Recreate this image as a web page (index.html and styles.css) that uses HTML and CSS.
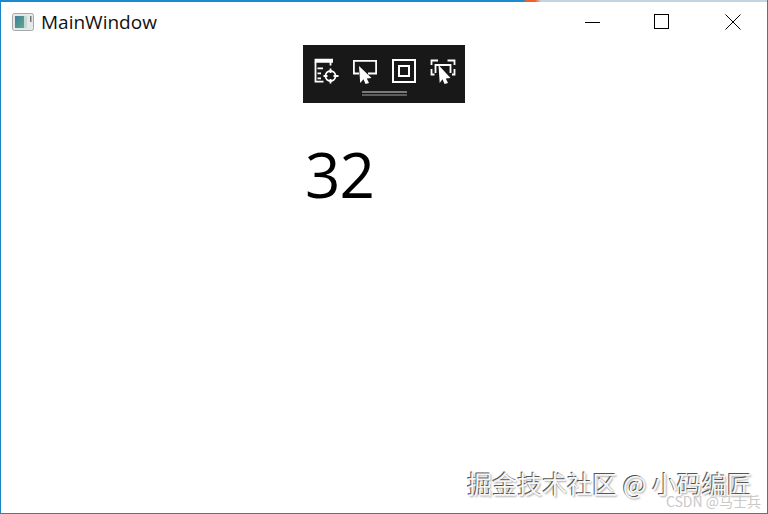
FILE: index.html
```html
<!DOCTYPE html>
<html lang="zh-CN">
<head>
    <meta charset="UTF-8">
    <meta name="viewport" content="width=device-width, initial-scale=1.0">
    <title>MainWindow</title>
    <link rel="stylesheet" href="styles.css">
</head>
<body>
    <div class="ventana">
        <div class="franja"></div>

        <!-- Barra de titulo -->
        <div class="titulo">
            <svg class="icono-app" width="24" height="20" viewBox="0 0 24 20">
                <defs>
                    <linearGradient id="grad-app" x1="0" y1="0" x2="1" y2="1">
                        <stop offset="0" stop-color="#3e7f9c"/>
                        <stop offset="1" stop-color="#5fa88c"/>
                    </linearGradient>
                </defs>
                <rect x="0.5" y="1.5" width="21" height="17" rx="2" fill="#e4e8e8" stroke="#a5abad"/>
                <rect x="3" y="4" width="9" height="12" fill="url(#grad-app)"/>
                <rect x="12" y="4" width="3" height="12" fill="#c8d6d4"/>
                <rect x="18" y="4" width="1.5" height="6" fill="#70787a"/>
            </svg>
            <span class="titulo-texto">MainWindow</span>
            <div class="botones">
                <button class="boton boton-min">
                    <svg width="16" height="16" viewBox="0 0 16 16"><path d="M0 8.5H15" stroke="#000" fill="none"/></svg>
                </button>
                <button class="boton">
                    <svg width="16" height="16" viewBox="0 0 16 16"><rect x="0.5" y="0.5" width="14" height="14" stroke="#000" fill="none"/></svg>
                </button>
                <button class="boton">
                    <svg width="16" height="16" viewBox="0 0 16 16"><path d="M0.5 0.5L15.5 15.5M15.5 0.5L0.5 15.5" stroke="#000" fill="none"/></svg>
                </button>
            </div>
        </div>

        <!-- Contenido -->
        <div class="contenido">
            <div class="columna">
                <div class="herramientas">
                    <div class="iconos">
                        <svg width="26" height="26" viewBox="0 0 26 26" fill="none" stroke="#fff" stroke-width="1.8">
                            <path d="M2.5 4V23.6H10.5"/>
                            <path d="M1.6 2.8H18V4.8" stroke-width="4"/>
                            <path d="M17.5 4V7.5"/>
                            <path d="M4.5 10.3H10M4.5 15.3H8M4.5 20.3H8"/>
                            <circle cx="17.5" cy="18" r="5"/>
                            <path d="M17.5 10.5V15M17.5 21V25.5M10.5 18H14.5M20.5 18H25.5"/>
                        </svg>
                        <svg width="26" height="26" viewBox="0 0 26 26" fill="none" stroke="#fff" stroke-width="1.8">
                            <path d="M7 15.5H1.9V2.9H24.1V15.5H16"/>
                            <path d="M7 8L19.5 20L14.8 20.5L17 25L13.5 26L11.5 21.2L8.2 25Z" fill="#fff" stroke="none"/>
                        </svg>
                        <svg width="26" height="26" viewBox="0 0 26 26" fill="none" stroke="#fff" stroke-width="2">
                            <rect x="2" y="2" width="22" height="22"/>
                            <rect x="8" y="8" width="10" height="10"/>
                        </svg>
                        <svg width="26" height="26" viewBox="0 0 26 26" fill="none" stroke="#fff" stroke-width="1.8">
                            <path d="M1.5 7V2.5H8M17.5 2.5H24.5V7M1.5 11V16.5H4.5M24.5 11V16.5H22"/>
                            <path d="M5.5 15V7H20.5V15"/>
                            <path d="M8.5 7L20.5 20L15.8 20.5L18 25L14.5 26L12.5 21.2L9.7 25Z" fill="#fff" stroke="none"/>
                        </svg>
                    </div>
                    <div class="asa"></div>
                </div>
                <div class="numero">32</div>
            </div>
        </div>

        <!-- Marcas de agua -->
        <div class="marca">掘金技术社区 @ 小码编匠</div>
        <div class="marca-csdn">CSDN @马士兵</div>
    </div>
</body>
</html>
```

FILE: styles.css
```css
/* Ventana */
html, body {
    margin: 0;
    padding: 0;
    height: 100%;
    overflow: hidden;
}

body {
    font-family: "Open Sans", "Noto Sans", sans-serif;
    background-color: white;
}

.ventana {
    position: relative;
    box-sizing: border-box;
    width: 768px;
    height: 514px;
    border: 1px solid #1a86c4;
    border-top: none;
    overflow: hidden;
}

/* Franja superior: azul, naranja y gris */
.franja {
    height: 2px;
    background: linear-gradient(to right, #1a8ad0 522px, #f4602a 526px, #f4602a 534px, #c4d4e0 540px);
}

/* Barra de titulo */
.titulo {
    display: flex;
    align-items: center;
    height: 39px;
    padding-left: 11px;
}

.icono-app {
    margin-right: 5px;
}

.titulo-texto {
    font-size: 19px;
    color: #111;
}

.botones {
    display: flex;
    margin-left: auto;
    margin-right: -1px;
}

.boton {
    display: flex;
    align-items: center;
    justify-content: center;
    width: 71px;
    height: 39px;
    padding: 0;
    border: none;
    background: none;
}

.boton-min {
    margin-right: -2px;
}

/* Contenido */
.contenido {
    display: flex;
    justify-content: center;
    padding-top: 4px;
}

.columna {
    width: 162px;
}

.herramientas {
    background-color: #181818;
    height: 58px;
    display: flex;
    flex-direction: column;
    align-items: center;
}

.iconos {
    display: flex;
    gap: 13px;
    padding-top: 13px;
}

.asa {
    width: 45px;
    height: 1px;
    margin-top: 7px;
    border-top: 2px solid #7a7a7a;
    border-bottom: 2px solid #5e5e5e;
}

.numero {
    margin-top: 27px;
    margin-left: 2px;
    font-size: 62px;
    line-height: 88px;
    letter-spacing: -1px;
    color: #000;
}

/* Marcas de agua */
.marca {
    position: absolute;
    right: 15px;
    bottom: 15px;
    font-family: "Noto Sans CJK SC", sans-serif;
    font-size: 25px;
    line-height: 30px;
    color: #f6f6f6;
    text-shadow: -1px -1px 0 #555, 1px 1px 2px #aaa;
}

.marca-csdn {
    position: absolute;
    right: 6px;
    bottom: 3px;
    font-family: "Noto Sans CJK SC", sans-serif;
    font-size: 14px;
    line-height: 18px;
    color: #c9c9c9;
}
```
